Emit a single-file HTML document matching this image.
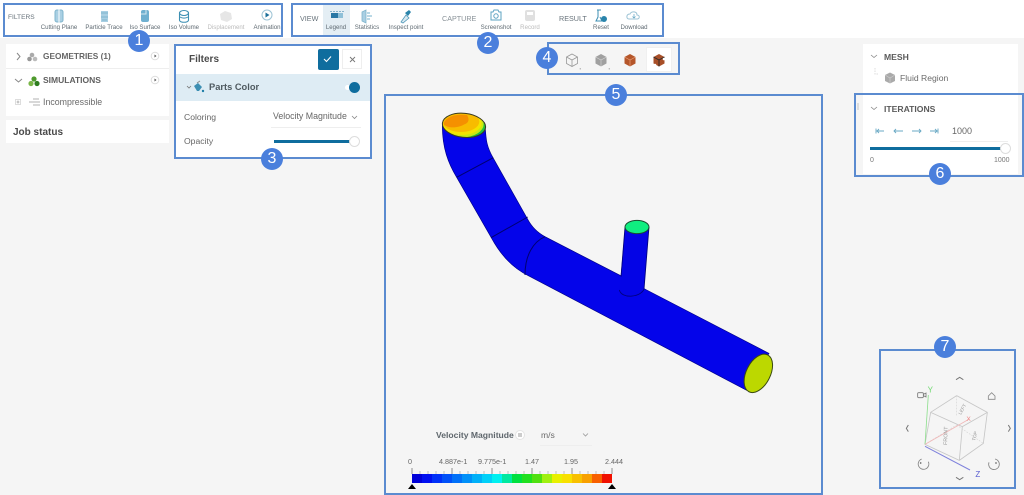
<!DOCTYPE html>
<html><head><meta charset="utf-8">
<style>
html,body{margin:0;padding:0;width:1024px;height:495px;overflow:hidden;background:#f5f5f5;font-family:"Liberation Sans",sans-serif;color:#555}
#w{position:absolute;left:0;top:0;width:1024px;height:495px;filter:blur(.3px)}
.a{position:absolute}
.t{position:absolute;white-space:nowrap;line-height:1}
.lbl{position:absolute;top:24px;font-size:6.1px;color:#5f6a72;white-space:nowrap;line-height:8px;transform:translateX(-50%)}
.box{position:absolute;border:2px solid #5b8bd0;box-sizing:border-box}
.badge{position:absolute;width:22px;height:22px;border-radius:50%;background:#4a7fdc;color:#fff;font-size:16px;line-height:22px;text-align:center;transform:translate(-50%,-50%)}
.card{position:absolute;background:#fff}
svg{position:absolute;overflow:visible}
</style></head><body><div id="w">

<div class="a" style="left:0;top:0;width:1024px;height:38px;background:#fff"></div>
<div class="a" style="left:323px;top:3px;width:27px;height:33px;background:#e4eef4"></div>

<div class="t" style="left:8px;top:15px;font-size:6.6px;color:#68737b">FILTERS</div>
<div class="lbl" style="left:59px">Cutting Plane</div>
<div class="lbl" style="left:104px">Particle Trace</div>
<div class="lbl" style="left:145px">Iso Surface</div>
<div class="lbl" style="left:184px">Iso Volume</div>
<div class="lbl" style="left:226px;color:#bbb">Displacement</div>
<div class="lbl" style="left:267px">Animation</div>
<div class="t" style="left:300px;top:15px;font-size:7.2px;color:#68737b">VIEW</div>
<div class="lbl" style="left:336px">Legend</div>
<div class="lbl" style="left:367px">Statistics</div>
<div class="lbl" style="left:406px">Inspect point</div>
<div class="t" style="left:442px;top:15px;font-size:7.2px;color:#8a9298">CAPTURE</div>
<div class="lbl" style="left:496px">Screenshot</div>
<div class="lbl" style="left:530px;color:#bbb">Record</div>
<div class="t" style="left:559px;top:15px;font-size:7.2px;color:#68737b">RESULT</div>
<div class="lbl" style="left:601px">Reset</div>
<div class="lbl" style="left:634px">Download</div>

<svg style="left:0;top:0" width="1024" height="40" viewBox="0 0 1024 40" fill="none">
<rect x="55" y="10" width="8" height="12" rx="2" fill="#a9cfe3" stroke="#7fb4cc"/><path d="M59 9v14" stroke="#fff"/>
<rect x="101" y="11" width="7" height="11" fill="#a9cfe3"/><path d="M101 13h7M101 17h7M102 20h5" stroke="#7fb4cc"/>
<rect x="141" y="10" width="8" height="12" rx="2" fill="#6fb0d0"/><path d="M141 14h5v-4" stroke="#d5e8f1"/>
<path d="M179.500 13v7c0 3 9 3 9 0v-7" stroke="#3d8fb3" stroke-width="1.100"/><ellipse cx="184" cy="13" rx="4.500" ry="2.500" stroke="#3d8fb3" stroke-width="1.100"/><path d="M180 17c2 1.500 6 1.500 8 0" stroke="#3d8fb3"/>
<path d="M220 14l5-3 6 2 1 6-5 3-6-2z" fill="#e6e6e6"/>
<circle cx="267" cy="15" r="5" stroke="#9cc3d5"/><path d="M265.500 12.500l4 2.500-4 2.500z" fill="#1b6f9a"/>
<path d="M331 13h7v5h-7z" fill="#2a78a5"/><path d="M331 11v1M334 11v1M337 11v1M340 11v1M343 11v1" stroke="#2a78a5"/><path d="M338 13h5v5h-5z" fill="#8fc0d8"/>
<path d="M362 12l4-2v13l-4-2z" fill="#a9cfe3" stroke="#7fb4cc" stroke-width=".8"/><path d="M367 13h3M367 16h5M367 19h3" stroke="#8fc0d8" stroke-width="1.300"/>
<path d="M401 22l5-7 3 3-6 5z" fill="#d8e9f1" stroke="#4f97b8" stroke-width=".8"/><path d="M405 13l4-3 2 2-3 4z" fill="#2a84ab"/>
<path d="M491 12h2l1-2h4l1 2h2v8h-10z" stroke="#5da3c2"/><circle cx="496" cy="16" r="2.200" stroke="#5da3c2"/>
<rect x="525" y="10" width="10" height="11" rx="2" fill="#e0e0e0"/><rect x="527" y="12" width="6" height="3" fill="#fff"/>
<path d="M597 10h4M598 10v7l-2 4h6l-2-4" stroke="#3d8fb3"/><circle cx="604" cy="19" r="3" fill="#2a84ab"/>
<path d="M629 19c-3 0-3-5 1-5 1-3 7-3 7 1 3 0 3 4 0 4z" stroke="#9cc3d5"/><path d="M634 14v4M632.500 16.500l1.500 1.500 1.500-1.500" stroke="#5da3c2" stroke-width=".7"/>
</svg>

<!-- left panels -->
<div class="card" style="left:6px;top:44px;width:163px;height:72px"></div>
<div class="a" style="left:6px;top:68px;width:163px;height:1px;background:#eee"></div>
<div class="card" style="left:6px;top:120px;width:163px;height:23px"></div>
<div class="t" style="left:43px;top:52px;font-size:8.300px;font-weight:bold;color:#666">GEOMETRIES (1)</div>
<div class="t" style="left:43px;top:76px;font-size:8.500px;font-weight:bold;color:#606060">SIMULATIONS</div>
<div class="t" style="left:43px;top:98px;font-size:8.800px;color:#6a6a6a">Incompressible</div>
<div class="t" style="left:13px;top:128px;font-size:10px;font-weight:bold;color:#4a4a4a">Job status</div>
<svg style="left:0;top:40px" width="175" height="70" viewBox="0 0 175 70" fill="none">
<path d="M17 13l3 3.500-3 3.500" stroke="#888"/>
<path d="M15 39l3.500 3 3.500-3" stroke="#888"/>
<circle cx="32" cy="15" r="2.300" fill="#aaa"/><circle cx="29.500" cy="19" r="2.300" fill="#999"/><circle cx="35" cy="19" r="2.300" fill="#bbb"/>
<circle cx="34" cy="39" r="2.600" fill="#4f9a2e"/><circle cx="31" cy="43.500" r="2.600" fill="#7ab648"/><circle cx="37" cy="43.500" r="2.600" fill="#2f7d20"/>
<circle cx="155" cy="16" r="3.800" fill="#fff" stroke="#ddd"/><path d="M154.500 14.500l2 1.500-2 1.500z" fill="#555"/>
<circle cx="155" cy="40" r="3.800" fill="#fff" stroke="#ddd"/><path d="M154.500 38.500l2 1.500-2 1.500z" fill="#555"/>
<rect x="15.500" y="59.500" width="5" height="5" fill="#fff" stroke="#ddd"/><path d="M16.500 62h3M18 60.500v3" stroke="#888" stroke-width=".6"/>
<path d="M33 59h6M29 62h11M33 65h7" stroke="#999" stroke-width=".8"/>
</svg>

<!-- filters card -->
<div class="card" style="left:175px;top:45px;width:195px;height:112px"></div>
<div class="a" style="left:175px;top:74px;width:195px;height:27px;background:#deecf4"></div>
<div class="t" style="left:189px;top:55px;font-size:10px;font-weight:bold;color:#4a4a4a">Filters</div>
<div class="a" style="left:318px;top:49px;width:21px;height:21px;background:#0f6d9e;border-radius:2px"></div>
<div class="a" style="left:342px;top:49px;width:20px;height:20px;background:#fff;border:1px solid #eee;box-sizing:border-box"></div>
<div class="t" style="left:209px;top:82.500px;font-size:9.300px;font-weight:bold;color:#4f5a60">Parts Color</div>
<div class="t" style="left:184px;top:113px;font-size:8.600px;color:#666">Coloring</div>
<div class="t" style="left:184px;top:137px;font-size:8.600px;color:#666">Opacity</div>
<div class="t" style="left:273px;top:112px;font-size:8.800px;color:#666">Velocity Magnitude</div>
<div class="a" style="left:271px;top:127px;width:90px;height:1px;background:#eee"></div>
<div class="a" style="left:274px;top:140px;width:80px;height:3px;background:#0f6d9e"></div>
<div class="a" style="left:349px;top:136px;width:11px;height:11px;background:#fff;border:1px solid #ddd;border-radius:50%;box-sizing:border-box"></div>
<div class="a" style="left:345px;top:85px;width:8px;height:5px;background:#fff;border-radius:3px"></div>
<div class="a" style="left:349px;top:82px;width:11px;height:11px;background:#0f6d9e;border-radius:50%"></div>
<svg style="left:175px;top:45px" width="195" height="112" viewBox="0 0 195 112" fill="none">
<path d="M149 14l2.500 2.500 4.500-5" stroke="#fff" stroke-width="1.100"/>
<path d="M175 12l5 5M180 12l-5 5" stroke="#777" stroke-width=".9"/>
<path d="M12 41l2 2 2-2" stroke="#777" stroke-width=".8"/>
<path d="M19 41l4-3 4 4-3 4h-2z" fill="#3d8fb3"/><circle cx="28" cy="46" r="1.200" fill="#1f7fa8"/><path d="M22 38l3-2" stroke="#8a8a8a"/>
<path d="M177 71l2.500 2.500 2.500-2.500" stroke="#888" stroke-width=".8"/>
</svg>

<!-- view cube buttons -->
<div class="a" style="left:646px;top:47px;width:26px;height:25px;background:#fff;border:1px solid #f0f0f0;box-sizing:border-box"></div>
<svg style="left:550px;top:40px" width="130" height="36" viewBox="0 0 130 36" fill="none">
<path d="M22 14l5.500 3v6.500l-5.500 3-5.500-3V17zM16.500 17l5.500 3 5.500-3M22 20v6.500" stroke="#999" stroke-width=".8"/>
<path d="M51 14l5.500 3v6.500l-5.500 3-5.500-3V17z" fill="#a0a0a0"/><path d="M45.500 17l5.500 3 5.500-3M51 20v6.500" stroke="#d5d5d5" stroke-width=".6"/>
<path d="M80 14l5.500 3v6.500l-5.500 3-5.500-3V17z" fill="#b5562a"/><path d="M74.500 17l5.500 3 5.500-3M80 20v6.500" stroke="#e9a27c" stroke-width=".7"/>
<path d="M109 14l5.500 3v6.500l-5.500 3-5.500-3V17z" fill="#a84f28"/><path d="M103.500 17l5.500 3 5.500-3M109 20v6.500" stroke="#2a2a2a" stroke-width=".9"/><circle cx="114" cy="19" r="1.300" fill="#fff"/><circle cx="105" cy="25" r="1.300" fill="#fff"/>
<path d="M29 29l2-1v1.500zM58 29l2-1v1.500z" fill="#aaa"/>
</svg>

<!-- pipe -->
<svg style="left:385px;top:95px" width="420" height="310" viewBox="0 0 1260 930">
<defs>
<clipPath id="c"><ellipse cx="237" cy="91" rx="65" ry="36" transform="rotate(6 237 91)"/></clipPath>
</defs>
<path d="M172 92C172 160 190 205 215 247L320 430C350 485 385 520 430 542L1085 886L1152 775L785 585L705 541L480 425C455 412 440 395 428 373L325 190C305 155 303 135 301 100Z" fill="#0404ea" stroke="#00008a" stroke-width="2"/>
<path d="M215 247L325 188M318 428L428 366M480 425C445 440 420 480 420 540" fill="none" stroke="#000070" stroke-width="3"/>
<path d="M720 396L703 590C710 612 765 608 777 583L792 396Z" fill="#0404e6"/>
<path d="M708 545L720 396M792 396L777 583M703 585C710 612 765 608 777 583" fill="none" stroke="#00007a" stroke-width="2.500"/>
<g clip-path="url(#c)">
<rect x="165" y="50" width="145" height="85" fill="#20c040"/>
<ellipse cx="232" cy="88" rx="64" ry="39" fill="#c8ea10"/>
<ellipse cx="230" cy="84" rx="60" ry="36" fill="#f4e400"/>
<ellipse cx="228" cy="80" rx="55" ry="31" fill="#f8bc00"/>
<path d="M176 88C180 68 205 56 246 60C254 72 252 84 238 88C222 98 192 102 176 88Z" fill="#f59000"/>
</g>
<ellipse cx="237" cy="91" rx="65" ry="36" transform="rotate(6 237 91)" fill="none" stroke="#3a3a20" stroke-width="3"/>
<ellipse cx="756" cy="396" rx="36" ry="20" fill="#10ee80" stroke="#1a4a30" stroke-width="3"/>
<ellipse cx="1120" cy="835" rx="36" ry="62" transform="rotate(27 1120 835)" fill="#bcd800" stroke="#3a4a10" stroke-width="3"/>
</svg>

<!-- legend -->
<div class="t" style="left:436px;top:431px;font-size:8.600px;font-weight:bold;color:#5e666c">Velocity Magnitude</div>
<div class="t" style="left:541px;top:431px;font-size:8.600px;color:#6a6a6a">m/s</div>
<div class="a" style="left:540px;top:445px;width:52px;height:1px;background:#eee"></div>
<div class="t" style="left:408px;top:458px;font-size:7.200px;color:#666">0</div>
<div class="t" style="left:439px;top:458px;font-size:7.200px;color:#666">4.887e-1</div>
<div class="t" style="left:478px;top:458px;font-size:7.200px;color:#666">9.775e-1</div>
<div class="t" style="left:525px;top:458px;font-size:7.200px;color:#666">1.47</div>
<div class="t" style="left:564px;top:458px;font-size:7.200px;color:#666">1.95</div>
<div class="t" style="left:605px;top:458px;font-size:7.200px;color:#666">2.444</div>
<svg style="left:405px;top:425px" width="215" height="70" viewBox="0 0 215 70" fill="none">
<circle cx="115" cy="10" r="4.500" fill="#fff" stroke="#e4e4e4"/><path d="M113 9h4M113 11h4" stroke="#777" stroke-width=".7"/>
<path d="M178 8.500l2.500 2.500 2.500-2.500" stroke="#999" stroke-width=".8"/>
<rect x="7" y="49" width="10" height="9" fill="#0000d8"/><rect x="17" y="49" width="10" height="9" fill="#0010f0"/><rect x="27" y="49" width="10" height="9" fill="#0030f8"/><rect x="37" y="49" width="10" height="9" fill="#0050f8"/><rect x="47" y="49" width="10" height="9" fill="#0070f8"/><rect x="57" y="49" width="10" height="9" fill="#0090f8"/><rect x="67" y="49" width="10" height="9" fill="#00b0f8"/><rect x="77" y="49" width="10" height="9" fill="#00d0f8"/><rect x="87" y="49" width="10" height="9" fill="#00f0f0"/><rect x="97" y="49" width="10" height="9" fill="#00e8a0"/><rect x="107" y="49" width="10" height="9" fill="#00e040"/><rect x="117" y="49" width="10" height="9" fill="#20e020"/><rect x="127" y="49" width="10" height="9" fill="#50e010"/><rect x="137" y="49" width="10" height="9" fill="#a0f010"/><rect x="147" y="49" width="10" height="9" fill="#e8f000"/><rect x="157" y="49" width="10" height="9" fill="#f8e000"/><rect x="167" y="49" width="10" height="9" fill="#f8c000"/><rect x="177" y="49" width="10" height="9" fill="#f8a000"/><rect x="187" y="49" width="10" height="9" fill="#f86000"/><rect x="197" y="49" width="10" height="9" fill="#f01000"/>
<path d="M7 43v6M47 43v6M87 43v6M127 43v6M167 43v6M207 43v6" stroke="#777" stroke-width=".8"/>
<path d="M15 46v3M23 46v3M31 46v3M39 46v3M55 46v3M63 46v3M71 46v3M79 46v3M95 46v3M103 46v3M111 46v3M119 46v3M135 46v3M143 46v3M151 46v3M159 46v3M175 46v3M183 46v3M191 46v3M199 46v3" stroke="#aaa" stroke-width=".7"/>
<path d="M7 59l4 5h-8zM207 59l4 5h-8z" fill="#000"/>
</svg>

<!-- right panels -->
<div class="card" style="left:863px;top:44px;width:155px;height:130px"></div>
<div class="t" style="left:884px;top:53px;font-size:8.600px;font-weight:bold;color:#5a5a5a">MESH</div>
<div class="t" style="left:900px;top:74px;font-size:8.600px;color:#6a6a6a">Fluid Region</div>
<div class="t" style="left:884px;top:105px;font-size:8.600px;font-weight:bold;color:#5a5a5a">ITERATIONS</div>
<div class="t" style="left:952px;top:127px;font-size:9px;color:#666">1000</div>
<div class="a" style="left:950px;top:141px;width:58px;height:1px;background:#eee"></div>
<div class="a" style="left:870px;top:147px;width:132px;height:3px;background:#0f6d9e"></div>
<div class="a" style="left:1000px;top:143px;width:11px;height:11px;background:#fff;border:1px solid #ddd;border-radius:50%;box-sizing:border-box"></div>
<div class="t" style="left:870px;top:157px;font-size:7px;color:#777">0</div>
<div class="t" style="left:994px;top:157px;font-size:7px;color:#777">1000</div>
<svg style="left:850px;top:40px" width="174" height="110" viewBox="0 0 174 110" fill="none">
<path d="M21 15l3 2.500 3-2.500M21 67l3 2.500 3-2.500" stroke="#888" stroke-width=".8"/>
<path d="M25 28v6h4" stroke="#ddd" stroke-dasharray="1.500 1"/>
<path d="M35 35l5-2.500 5 2.500v6l-5 2.500-5-2.500z" fill="#aaa"/><path d="M40 38v5.500M35 35l5 3 5-3" stroke="#ddd" stroke-width=".5"/>
<path d="M8 63v7" stroke="#ddd" stroke-width="2"/>
<g stroke="#6aa9c5" stroke-width=".9">
<path d="M26 91h8M26 88.500v5M29 89l-2 2 2 2"/><path d="M44 91h9M46 89l-2 2 2 2"/><path d="M62 91h9M69 89l2 2-2 2"/><path d="M80 91h8M88 88.500v5M85 89l2 2-2 2"/>
</g>
</svg>

<!-- gizmo -->
<svg style="left:875px;top:335px" width="149" height="160" viewBox="0 0 447 480" fill="none">
<path d="M243 134l11-7 11 7M100 270l-6 10 6 10M400 270l6 10-6 10M243 427l11 7 11-7" stroke="#777" stroke-width="3"/>
<rect x="128" y="173" width="17" height="15" rx="3" stroke="#777" stroke-width="2.500"/><path d="M145 178l8-4v12l-8-4" stroke="#777" stroke-width="2.500"/>
<path d="M340 183l10-10 10 10v10h-20z" stroke="#888" stroke-width="2.500"/>
<path d="M140 372a16 16 0 1 0 20 8" stroke="#888" stroke-width="2.500"/><circle cx="137" cy="384" r="2.500" fill="#666"/>
<path d="M360 372a16 16 0 1 1 -18 10" stroke="#888" stroke-width="2.500"/><circle cx="363" cy="384" r="2.500" fill="#666"/>
<path d="M167 232L245 182 337 232 325 325 253 376 150 328Z" stroke="#c6c6c6" stroke-width="2.500"/>
<path d="M167 232L262 275 337 232M262 275L253 376" stroke="#c6c6c6" stroke-width="2.500"/>
<path d="M245 182L245 245M150 328L245 270M245 270L325 325" stroke="#d6d6d6" stroke-width="2" stroke-dasharray="5 4"/>
<path d="M150 328L160 180" stroke="#8fe08f" stroke-width="2.500"/>
<path d="M150 328L283 252" stroke="#f0b8b8" stroke-width="2.500"/>
<path d="M150 334L285 405" stroke="#7f82dc" stroke-width="3"/>
<text x="158" y="172" font-family="Liberation Sans" font-size="24" fill="#6ed86e">Y</text>
<text x="274" y="258" font-family="Liberation Sans" font-size="20" fill="#ee8888">X</text>
<text x="301" y="426" font-family="Liberation Sans" font-size="24" fill="#5a5ed0">Z</text>
<text transform="translate(216 330) rotate(-88)" font-family="Liberation Sans" font-size="16" fill="#999">FRONT</text>
<text transform="translate(300 318) rotate(-75)" font-family="Liberation Sans" font-size="14" fill="#999">TOP</text>
<text transform="translate(258 240) rotate(-62)" font-family="Liberation Sans" font-size="14" fill="#999">LEFT</text>
</svg>

<!-- annotation boxes -->
<div class="box" style="left:3px;top:3px;width:280px;height:34px"></div>
<div class="box" style="left:291px;top:3px;width:373px;height:34px"></div>
<div class="box" style="left:174px;top:44px;width:198px;height:115px"></div>
<div class="box" style="left:547px;top:42px;width:133px;height:33px"></div>
<div class="box" style="left:384px;top:94px;width:439px;height:401px"></div>
<div class="box" style="left:854px;top:93px;width:170px;height:84px"></div>
<div class="box" style="left:879px;top:349px;width:137px;height:140px"></div>
<div class="badge" style="left:139px;top:41px">1</div>
<div class="badge" style="left:488px;top:43px">2</div>
<div class="badge" style="left:272px;top:159px">3</div>
<div class="badge" style="left:547px;top:58px">4</div>
<div class="badge" style="left:616px;top:95px">5</div>
<div class="badge" style="left:940px;top:174px">6</div>
<div class="badge" style="left:945px;top:347px">7</div>
</div></body></html>
